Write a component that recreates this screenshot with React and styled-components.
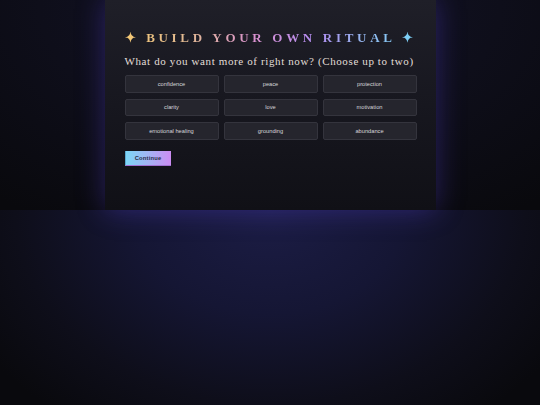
import React from "react";
import styled, { createGlobalStyle } from "styled-components";

const GlobalStyle = createGlobalStyle`
  html, body {
    margin: 0;
    padding: 0;
    background: #0a0a10;
  }
  * {
    box-sizing: border-box;
  }
`;

const Page = styled.div`
  min-height: 100vh;
  background:
    radial-gradient(ellipse 340px 260px at 50% 210px, #1c1d46 0%, #151634 40%, #0e0e1a 75%, #09090d 100%);
`;

const Stage = styled.div`
  display: flex;
  justify-content: center;
  background:
    radial-gradient(ellipse 420px 260px at 50% 0%, #13132a 0%, #0e0e1a 55%, #09090d 100%);
`;

const Card = styled.div`
  width: 331px;
  height: 210px;
  padding: 28px 19px 0 20px;
  background: linear-gradient(180deg, #1f1f28 0%, #17171f 50%, #101016 100%);
  box-shadow: 0 0 26px rgba(84, 64, 210, 0.4);
`;

const Title = styled.h1`
  margin: 0;
  font-family: "Liberation Serif", "Times New Roman", serif;
  font-weight: 700;
  font-size: 13px;
  line-height: 20px;
  letter-spacing: 3.7px;
  white-space: nowrap;
  background: linear-gradient(90deg, #f4c874 0%, #e0b894 22%, #d890d0 45%, #b18cf0 65%, #94b8f0 82%, #78d4f8 100%);
  -webkit-background-clip: text;
  background-clip: text;
  color: transparent;
`;

const Subtitle = styled.p`
  margin: 6px 0 0;
  font-family: "Liberation Serif", "Times New Roman", serif;
  font-size: 11px;
  line-height: 14px;
  letter-spacing: 0.62px;
  color: #e2ded8;
  white-space: nowrap;
`;

const Options = styled.div`
  margin-top: 7px;
  display: grid;
  grid-template-columns: repeat(3, 94px);
  column-gap: 5px;
  row-gap: 6px;
`;

const Option = styled.button`
  height: 17.5px;
  padding: 0;
  border: 1px solid #34343d;
  border-radius: 2px;
  background: ${(p) => (p.selected ? "#34304a" : "#25252d")};
  color: #d6d6da;
  font-family: "Liberation Sans", Arial, sans-serif;
  font-size: 5.7px;
  cursor: pointer;
`;

const ContinueButton = styled.button`
  margin-top: 11px;
  width: 46px;
  height: 15px;
  padding: 0;
  border: none;
  border-left: 1px solid #5aa8d0;
  border-bottom: 1px solid #a070d0;
  background: linear-gradient(90deg, #7cd6f6 0%, #a4b4f4 50%, #cc8cf2 100%);
  color: #2a2c48;
  font-family: "Liberation Sans", Arial, sans-serif;
  font-weight: 700;
  font-size: 5.8px;
  letter-spacing: 0.2px;
  cursor: pointer;
`;

const options = [
  "confidence",
  "peace",
  "protection",
  "clarity",
  "love",
  "motivation",
  "emotional healing",
  "grounding",
  "abundance",
];

export default function App() {
  return (
    <>
      <GlobalStyle />
      <Page>
        <Stage>
          <Card>
            <Title>✦ BUILD YOUR OWN RITUAL ✦</Title>
            <Subtitle>What do you want more of right now? (Choose up to two)</Subtitle>
            <Options>
              {options.map((o) => (
                <Option key={o}>{o}</Option>
              ))}
            </Options>
            <ContinueButton>Continue</ContinueButton>
          </Card>
        </Stage>
      </Page>
    </>
  );
}
